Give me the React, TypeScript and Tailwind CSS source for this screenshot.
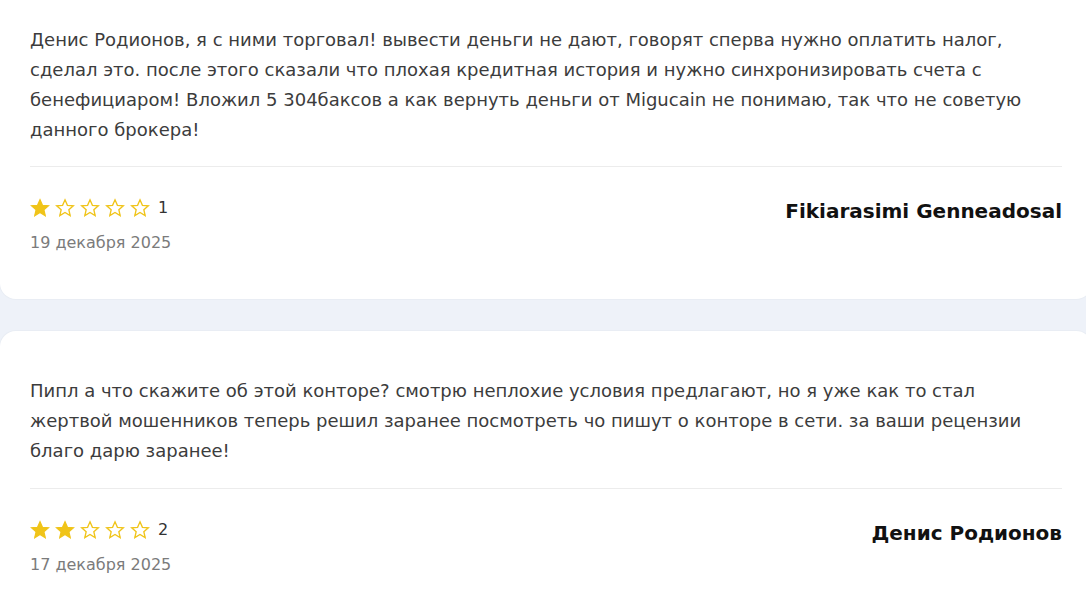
import React from 'react';

type Review = {
  text: string;
  rating: number;
  date: string;
  author: string;
};

const reviews: Review[] = [
  {
    text: 'Денис Родионов, я с ними торговал! вывести деньги не дают, говорят сперва нужно оплатить налог, сделал это. после этого сказали что плохая кредитная история и нужно синхронизировать счета с бенефициаром! Вложил 5 304баксов а как вернуть деньги от Migucain не понимаю, так что не советую данного брокера!',
    rating: 1,
    date: '19 декабря 2025',
    author: 'Fikiarasimi Genneadosal',
  },
  {
    text: 'Пипл а что скажите об этой конторе? смотрю неплохие условия предлагают, но я уже как то стал жертвой мошенников теперь решил заранее посмотреть чо пишут о конторе в сети. за ваши рецензии благо дарю заранее!',
    rating: 2,
    date: '17 декабря 2025',
    author: 'Денис Родионов',
  },
];

const StarIcon = ({ filled }: { filled: boolean }) => (
  <svg width="20" height="20" viewBox="0 0 24 24" className="shrink-0">
    <polygon
      points="12,2.2 14.9,8.8 22,9.4 16.6,14.1 18.2,21.1 12,17.4 5.8,21.1 7.4,14.1 2,9.4 9.1,8.8"
      fill={filled ? '#f0c419' : 'none'}
      stroke="#f0c419"
      strokeWidth="1.6"
      strokeLinejoin="miter"
    />
  </svg>
);

const ReviewCard = ({ review, first }: { review: Review; first?: boolean }) => (
  <div
    className={
      'bg-white rounded-[16px] shadow-[0_0_0_1px_#e9edf4] pl-[30px] pr-[30px] pb-[45px] ' +
      (first ? 'pt-[25px] rounded-t-none' : 'pt-[45px]')
    }
  >
    <p
      className={
        'text-[18px] leading-[30px] text-[#3c3c3c] border-b border-[#ececec] ' +
        (first ? 'pb-[21px]' : 'pb-[22px]')
      }
    >
      {review.text}
    </p>
    <div className="flex justify-between items-start pt-[30px]">
      <div>
        <div className="flex items-center gap-[5px] h-[22px]">
          {[1, 2, 3, 4, 5].map((i) => (
            <StarIcon key={i} filled={i <= review.rating} />
          ))}
          <span className="ml-[3px] text-[16px] text-[#333]">{review.rating}</span>
        </div>
        <div className="mt-[13px] text-[16px] leading-[22px] text-[#7b7b7b]">{review.date}</div>
      </div>
      <div className="text-[20px] font-bold text-[#111] leading-[26px] pt-[1px]">{review.author}</div>
    </div>
  </div>
);

export default function App() {
  return (
    <div className="w-[1086px] h-[592px] overflow-hidden bg-[#eef2f9]">
      <div
        className="w-[1092px] flex flex-col gap-[32px]"
        style={{ fontFamily: '"DejaVu Sans", sans-serif' }}
      >
        <ReviewCard review={reviews[0]} first />
        <ReviewCard review={reviews[1]} />
      </div>
    </div>
  );
}
